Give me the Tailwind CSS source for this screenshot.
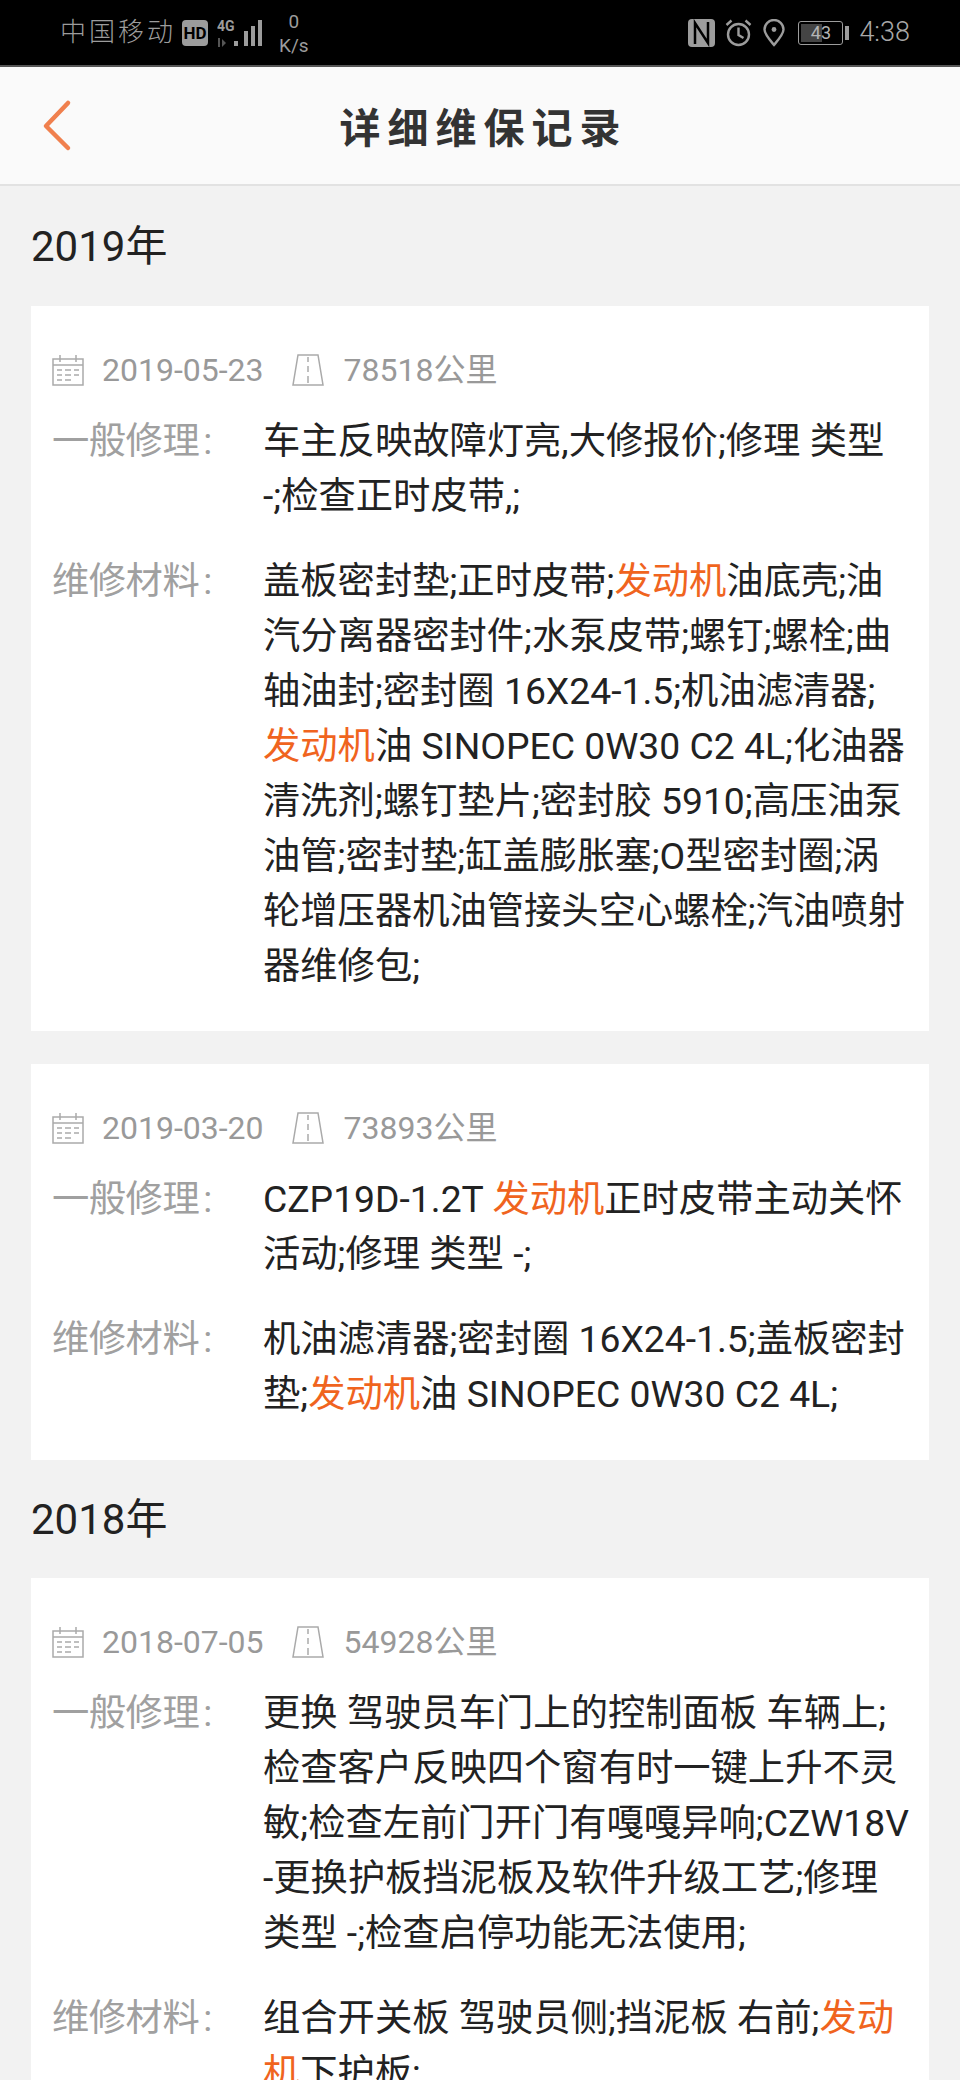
<!DOCTYPE html>
<html lang="zh-CN">
<head>
    <meta charset="UTF-8">
    <meta name="viewport" content="width=device-width, initial-scale=1.0">
    <title>详细维保记录</title>
    <script src="https://cdn.jsdelivr.net/npm/@tailwindcss/browser@4"></script>
</head>
<body class="bg-[#f2f2f2] h-[2080px] overflow-hidden font-['Roboto','Noto_Sans_CJK_SC',sans-serif]">

    <!-- 状态栏 -->
    <div class="h-[67px] bg-black text-[#9c9c9c] flex items-center justify-between pl-[60px] pr-[50px] border-b-2 border-[#555]">
        <div class="flex items-center">
            <span class="w-[116px] shrink-0 text-[26px] tracking-[3px] font-light whitespace-nowrap">中国移动</span>
            <span class="ml-[6px] w-[26px] h-[26px] rounded-[4px] bg-[#9c9c9c] text-black text-[17px] font-bold leading-[26px] text-center">HD</span>
            <svg class="ml-[9px]" width="46" height="30" viewBox="0 0 46 30" fill="#9c9c9c">
                <text x="0" y="13" font-size="14" font-weight="700" font-family="Roboto">4G</text>
                <rect x="1" y="20" width="2" height="9" fill="#555"/>
                <path d="M5 21l4 4-4 4z" fill="#555"/>
                <rect x="17" y="23" width="4" height="5"/>
                <rect x="27" y="13" width="4" height="15"/>
                <rect x="34" y="8" width="4" height="20"/>
                <rect x="41" y="2" width="4" height="26"/>
            </svg>
            <div class="ml-[16px] flex flex-col items-center text-[19px] leading-[24px] mt-[3px]">
                <span>0</span>
                <span>K/s</span>
            </div>
        </div>
        <div class="flex items-center">
            <!-- NFC -->
            <svg width="27" height="28" viewBox="0 0 27 28">
                <rect x="0" y="0" width="27" height="28" rx="4" fill="#9c9c9c"/>
                <path d="M7 25V4l13 20V3" fill="none" stroke="#000" stroke-width="2.500"/>
            </svg>
            <svg class="ml-[10px]" width="27" height="28" viewBox="0 0 27 28" fill="none" stroke="#9c9c9c" stroke-width="2.400">
                <circle cx="13.500" cy="15.500" r="10.500"/>
                <path d="M13.500 8.500v7.500l5 3"/>
                <path d="M1.500 6l5-4.500M25.500 6l-5-4.500"/>
            </svg>
            <svg class="ml-[11px]" width="22" height="28" viewBox="0 0 22 28" fill="none" stroke="#9c9c9c" stroke-width="2.400">
                <path d="M11 26C6 20 1.500 15 1.500 10.500a9.500 9.500 0 0 1 19 0C20.500 15 16 20 11 26z"/>
                <circle cx="11" cy="10.500" r="2.400" fill="#9c9c9c" stroke="none"/>
            </svg>
            <div class="ml-[13px] relative w-[45px] h-[24px] rounded-[3px] border border-[#9c9c9c] text-[#b5b5b5] text-[18px] leading-[22px] text-center">
                <div class="absolute left-[2px] top-[2px] bottom-[2px] w-[21px] bg-[#444]"></div>
                <span class="relative">43</span>
            </div>
            <div class="ml-[2px] w-[4px] h-[14px] bg-[#9c9c9c]"></div>
            <span class="ml-[10px] text-[27px] font-light text-[#a8a8a8]">4:38</span>
        </div>
    </div>

    <!-- 标题栏 -->
    <div class="relative h-[119px] bg-[#fafafa] border-b-2 border-[#e2e2e2] flex items-center justify-center">
        <svg class="absolute left-[41px] top-[31px]" width="34" height="54" viewBox="0 0 34 54" fill="none" stroke="#f0804e" stroke-width="4.500" stroke-linecap="round" stroke-linejoin="round">
            <path d="M27 5L5 28l22 22"/>
        </svg>
        <h1 class="pl-[7px] text-[41px] font-bold tracking-[7px] text-[#333] font-['Noto_Sans_CJK_SC',sans-serif]">详细维保记录</h1>
    </div>

    <div class="px-[31px]">
        <h2 class="h-[120px] flex items-center text-[42px] text-[#222]">2019年</h2>

        <!-- 2019-05-23 -->
        <div class="bg-white pt-[44px] pb-[37px] mb-[33px]">
            <div class="flex items-center h-[40px] pl-[21px] text-[32px] text-[#999]">
                <svg width="32" height="32" viewBox="0 0 32 32" fill="none" stroke="#aaa" stroke-width="1.500">
                    <rect x="1" y="5" width="30" height="26"/>
                    <path d="M1 11h30M8 1v7M24 1v7"/>
                    <path d="M5 16h5M13 16h6M22 16h5M5 21h5M13 21h6M22 21h5M5 26h5M13 26h6" stroke-width="1.300"/>
                </svg>
                <span class="ml-[18px]">2019-05-23</span>
                <svg class="ml-[28px]" width="32" height="32" viewBox="0 0 32 32" fill="none" stroke="#aaa" stroke-width="1.500">
                    <path d="M6 1h20l5 30H1z"/>
                    <path d="M16 3v5M16 12v6M16 22v7"/>
                </svg>
                <span class="ml-[20px]">78518公里</span>
            </div>
            <div class="flex mt-[24px] pl-[21px] text-[37.300px] leading-[55px]">
                <span class="w-[211px] shrink-0 text-[#a0a0a0] tracking-[-0.500px]">一般修理<span class="ml-[4px]">:</span></span>
                <div class="text-[#222] whitespace-nowrap">
                    <div>车主反映故障灯亮,大修报价;修理 类型</div>
                    <div>-;检查正时皮带,;</div>
                </div>
            </div>
            <div class="flex mt-[30px] pl-[21px] text-[37.300px] leading-[55px]">
                <span class="w-[211px] shrink-0 text-[#a0a0a0] tracking-[-0.500px]">维修材料<span class="ml-[4px]">:</span></span>
                <div class="text-[#222] whitespace-nowrap">
                    <div>盖板密封垫;正时皮带;<span class="text-[#f0641e]">发动机</span>油底壳;油</div>
                    <div>汽分离器密封件;水泵皮带;螺钉;螺栓;曲</div>
                    <div>轴油封;密封圈 16X24-1.5;机油滤清器;</div>
                    <div><span class="text-[#f0641e]">发动机</span>油 SINOPEC 0W30 C2 4L;化油器</div>
                    <div>清洗剂;螺钉垫片;密封胶 5910;高压油泵</div>
                    <div>油管;密封垫;缸盖膨胀塞;O型密封圈;涡</div>
                    <div>轮增压器机油管接头空心螺栓;汽油喷射</div>
                    <div>器维修包;</div>
                </div>
            </div>
        </div>

        <!-- 2019-03-20 -->
        <div class="bg-white pt-[44px] pb-[38px]">
            <div class="flex items-center h-[40px] pl-[21px] text-[32px] text-[#999]">
                <svg width="32" height="32" viewBox="0 0 32 32" fill="none" stroke="#aaa" stroke-width="1.500">
                    <rect x="1" y="5" width="30" height="26"/>
                    <path d="M1 11h30M8 1v7M24 1v7"/>
                    <path d="M5 16h5M13 16h6M22 16h5M5 21h5M13 21h6M22 21h5M5 26h5M13 26h6" stroke-width="1.300"/>
                </svg>
                <span class="ml-[18px]">2019-03-20</span>
                <svg class="ml-[28px]" width="32" height="32" viewBox="0 0 32 32" fill="none" stroke="#aaa" stroke-width="1.500">
                    <path d="M6 1h20l5 30H1z"/>
                    <path d="M16 3v5M16 12v6M16 22v7"/>
                </svg>
                <span class="ml-[20px]">73893公里</span>
            </div>
            <div class="flex mt-[24px] pl-[21px] text-[37.300px] leading-[55px]">
                <span class="w-[211px] shrink-0 text-[#a0a0a0] tracking-[-0.500px]">一般修理<span class="ml-[4px]">:</span></span>
                <div class="text-[#222] whitespace-nowrap">
                    <div>CZP19D-1.2T <span class="text-[#f0641e]">发动机</span>正时皮带主动关怀</div>
                    <div>活动;修理 类型 -;</div>
                </div>
            </div>
            <div class="flex mt-[30px] pl-[21px] text-[37.300px] leading-[55px]">
                <span class="w-[211px] shrink-0 text-[#a0a0a0] tracking-[-0.500px]">维修材料<span class="ml-[4px]">:</span></span>
                <div class="text-[#222] whitespace-nowrap">
                    <div>机油滤清器;密封圈 16X24-1.5;盖板密封</div>
                    <div>垫;<span class="text-[#f0641e]">发动机</span>油 SINOPEC 0W30 C2 4L;</div>
                </div>
            </div>
        </div>

        <h2 class="h-[118px] flex items-center text-[42px] text-[#222]">2018年</h2>

        <!-- 2018-07-05 -->
        <div class="bg-white pt-[44px] pb-[36px]">
            <div class="flex items-center h-[40px] pl-[21px] text-[32px] text-[#999]">
                <svg width="32" height="32" viewBox="0 0 32 32" fill="none" stroke="#aaa" stroke-width="1.500">
                    <rect x="1" y="5" width="30" height="26"/>
                    <path d="M1 11h30M8 1v7M24 1v7"/>
                    <path d="M5 16h5M13 16h6M22 16h5M5 21h5M13 21h6M22 21h5M5 26h5M13 26h6" stroke-width="1.300"/>
                </svg>
                <span class="ml-[18px]">2018-07-05</span>
                <svg class="ml-[28px]" width="32" height="32" viewBox="0 0 32 32" fill="none" stroke="#aaa" stroke-width="1.500">
                    <path d="M6 1h20l5 30H1z"/>
                    <path d="M16 3v5M16 12v6M16 22v7"/>
                </svg>
                <span class="ml-[20px]">54928公里</span>
            </div>
            <div class="flex mt-[24px] pl-[21px] text-[37.300px] leading-[55px]">
                <span class="w-[211px] shrink-0 text-[#a0a0a0] tracking-[-0.500px]">一般修理<span class="ml-[4px]">:</span></span>
                <div class="text-[#222] whitespace-nowrap">
                    <div>更换 驾驶员车门上的控制面板 车辆上;</div>
                    <div>检查客户反映四个窗有时一键上升不灵</div>
                    <div>敏;检查左前门开门有嘎嘎异响;CZW18V</div>
                    <div>-更换护板挡泥板及软件升级工艺;修理</div>
                    <div>类型 -;检查启停功能无法使用;</div>
                </div>
            </div>
            <div class="flex mt-[30px] pl-[21px] text-[37.300px] leading-[55px]">
                <span class="w-[211px] shrink-0 text-[#a0a0a0] tracking-[-0.500px]">维修材料<span class="ml-[4px]">:</span></span>
                <div class="text-[#222] whitespace-nowrap">
                    <div>组合开关板 驾驶员侧;挡泥板 右前;<span class="text-[#f0641e]">发动</span></div>
                    <div><span class="text-[#f0641e]">机</span>下护板;</div>
                </div>
            </div>
        </div>
    </div>
</body>
</html>
